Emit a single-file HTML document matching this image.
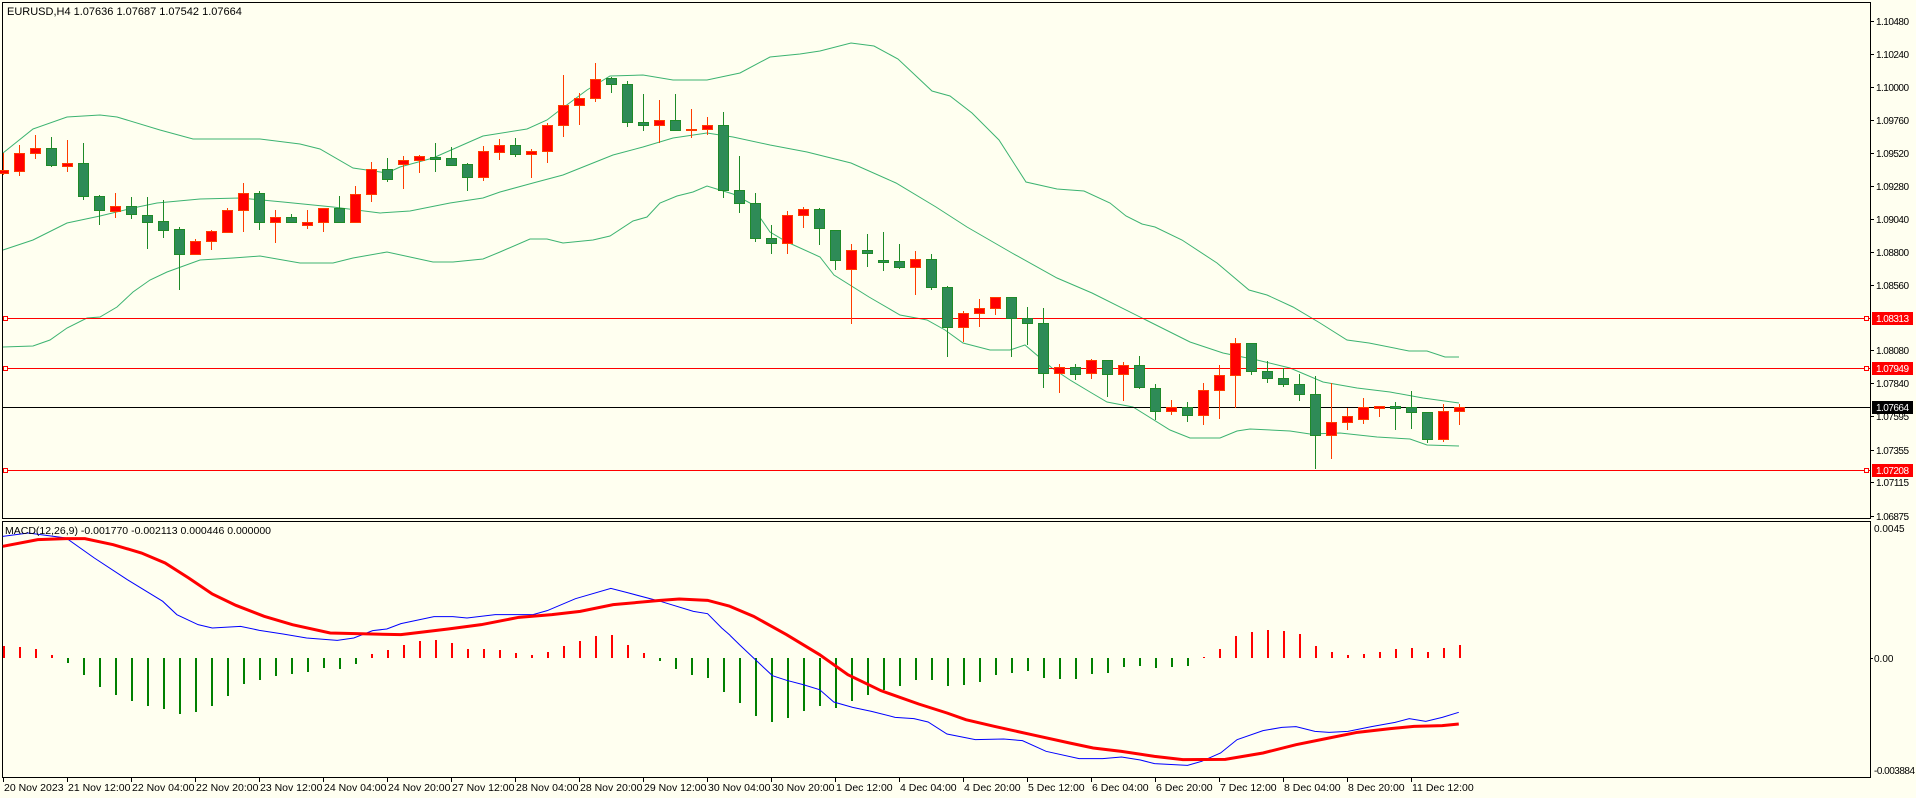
<!DOCTYPE html>
<html><head><meta charset="utf-8"><style>
html,body{margin:0;padding:0;background:#fffff0;width:1916px;height:798px;overflow:hidden}
svg{position:absolute;left:0;top:0}
text{font-family:"Liberation Sans",sans-serif;font-size:11px;fill:#000}
.ax{font-size:10px}
</style></head><body>
<svg id="s" width="1916" height="798" xmlns="http://www.w3.org/2000/svg">
<rect width="1916" height="798" fill="#fffff0"/>
<rect x="2.5" y="2.5" width="1868" height="516" fill="none" stroke="#000"/>
<rect x="2.5" y="521.5" width="1868" height="256" fill="none" stroke="#000"/>
<g fill="none" stroke="#3cb371" stroke-width="1">
<polyline points="3,153 33,129 67,117 100,115 117,117 160,130 193,139 233,139 260,139 300,144 320,149 353,168 387,173 400,167 433,158 467,143 483,136 527,129 547,120 560,110 587,90 610,76 643,75 673,80 707,80 740,73 770,57 800,54 820,51 851,43 874,46 898,59 932,91 950,96 972,113 999,140 1026,182 1057,189 1084,191 1110,203 1126,216 1142,224 1155,227 1182,240 1217,263 1249,290 1267,295 1293,307 1320,323 1347,340 1369,343 1409,351 1427,351 1445,357 1459,357"/>
<polyline points="3,250 33,240 67,223 100,216 133,208 157,203 200,199 240,198 283,202 333,207 380,213 410,211 450,203 483,198 500,192 533,183 563,175 583,167 613,155 643,147 673,138 707,133 733,137 770,145 807,152 851,163 896,183 936,207 967,227 1012,253 1057,278 1092,293 1146,320 1190,342 1223,353 1257,360 1290,368 1323,382 1357,388 1390,392 1423,398 1459,403"/>
<polyline points="3,347 33,346 50,340 67,328 87,318 100,317 117,307 133,292 150,280 167,272 200,260 233,258 260,256 300,263 333,263 353,258 387,252 410,257 433,262 453,262 483,259 500,252 530,239 547,239 563,243 593,240 610,236 633,221 647,217 660,203 677,196 693,192 707,186 733,194 750,203 770,232 787,242 820,257 834,275 869,297 900,315 927,320 945,330 963,343 990,350 1010,350 1025,345 1052,368 1070,380 1090,392 1107,402 1133,407 1170,430 1190,438 1220,438 1237,431 1250,429 1290,431 1310,434 1340,433 1377,437 1410,439 1427,445 1459,446"/>
</g>
<g stroke="#ff0000" stroke-width="1">
<line x1="3" y1="318.5" x2="1870" y2="318.5"/>
<line x1="3" y1="368.5" x2="1870" y2="368.5"/>
<line x1="3" y1="470.5" x2="1870" y2="470.5"/>
</g>
<line x1="3" y1="407.5" x2="1870" y2="407.5" stroke="#000"/>
<g fill="#fffff0" stroke="#ff0000">
<rect x="1864.5" y="316.5" width="4" height="4"/><rect x="1864.5" y="366.5" width="4" height="4"/><rect x="1864.5" y="468.5" width="4" height="4"/>
<rect x="3.5" y="316.5" width="4" height="4"/><rect x="3.5" y="366.5" width="4" height="4"/><rect x="3.5" y="468.5" width="4" height="4"/>
</g>
<g id="candles"></g>
<g id="hist"></g>
<g transform="translate(0,518) scale(0.4717,0.33333)" fill="none">
<polyline vector-effect="non-scaling-stroke" stroke="#0000ff" stroke-width="1" points="6,55 60,45 140,60 200,120 270,185 345,250 375,290 420,320 450,330 510,325 550,337 600,348 650,360 715,367 750,360 790,338 820,333 850,317 920,296 960,296 990,300 1050,290 1130,290 1160,278 1220,242 1295,211 1330,224 1400,250 1470,280 1500,287 1530,330 1548,352"/>
<polyline vector-effect="non-scaling-stroke" stroke="#ff0000" stroke-width="3" points="6,85 80,65 140,62 180,62 240,80 300,105 350,135 400,180 450,228 500,262 560,295 620,320 700,345 850,350 950,333 1020,320 1100,298 1170,290 1230,280 1300,260 1400,247 1440,243 1500,247 1548,265"/>
</g>
<g transform="translate(730,518) scale(0.4717,0.33333)" fill="none">
<polyline vector-effect="non-scaling-stroke" stroke="#0000ff" stroke-width="1" points="0,352 20,380 50,420 90,473 120,487 155,500 190,515 220,552 260,568 300,580 350,598 390,602 420,612 460,648 520,665 580,663 620,668 670,700 740,722 790,722 830,717 870,726 900,737 970,742 1000,730 1040,705 1075,665 1130,638 1170,628 1200,626 1240,640 1270,643 1310,640 1360,626 1410,613 1440,602 1475,610 1510,598 1545,583"/>
<polyline vector-effect="non-scaling-stroke" stroke="#ff0000" stroke-width="3" points="0,265 50,295 120,350 190,410 250,470 320,518 400,558 460,585 500,605 560,625 640,650 720,675 770,690 830,700 900,715 960,725 1050,724 1130,705 1200,680 1270,660 1330,643 1400,632 1450,625 1510,623 1545,618"/>
</g>
<text x="7" y="15">EURUSD,H4  1.07636 1.07687 1.07542 1.07664</text>
<text x="5" y="534" style="font-size:10.5px">MACD(12,26,9) -0.001770 -0.002113 0.000446 0.000000</text>
<g id="paxis"></g>
<g>
<rect x="1872" y="312" width="41" height="13" fill="#ff0000"/><text class="ax" x="1876" y="322" textLength="33" style="fill:#fff">1.08313</text>
<rect x="1872" y="362" width="41" height="13" fill="#ff0000"/><text class="ax" x="1876" y="372" textLength="33" style="fill:#fff">1.07949</text>
<rect x="1872" y="401" width="41" height="13" fill="#000"/><text class="ax" x="1876" y="411" textLength="33" style="fill:#fff">1.07664</text>
<rect x="1872" y="464" width="41" height="13" fill="#ff0000"/><text class="ax" x="1876" y="474" textLength="33" style="fill:#fff">1.07208</text>
</g>
<text class="ax" x="1874" y="532">0.0045</text>
<line x1="1870" y1="658.5" x2="1873" y2="658.5" stroke="#000"/>
<text class="ax" x="1874" y="662">0.00</text>
<text class="ax" x="1874" y="774" textLength="41">-0.003884</text>
<g id="taxis"></g>
</svg>
<script>
var NS="http://www.w3.org/2000/svg";
function el(p,n,a,t){var e=document.createElementNS(NS,n);for(var k in a)e.setAttribute(k,a[k]);if(t)e.textContent=t;p.appendChild(e);return e;}
var C=[
["R",153,170,173,175],["R",145,153,171,176],["R",135,148,153,159],["G",137,148,165,167],["R",140,163,166,172],["G",143,163,196,200],["G",195,196,210,225],["R",193,206,211,218],["G",197,206,214,219],["G",197,215,222,249],
["G",200,221,230,238],["G",227,229,254,290],["R",239,241,254,255],["R",230,231,241,250],["R",208,210,232,233],["R",183,193,210,232],["G",191,193,222,230],["R",210,217,222,243],["G",214,217,222,222],["R",210,222,225,229],
["R",208,208,222,232],["G",196,208,222,222],["R",186,194,222,223],["R",162,169,194,202],["G",158,169,179,182],["R",156,160,164,189],["R",155,156,160,173],["G",143,157,159,172],["G",147,158,165,166],["G",163,164,177,191],
["R",146,151,177,181],["R",139,145,152,160],["G",138,145,154,157],["R",149,151,154,178],["R",123,125,151,163],["R",75,105,125,137],["R",93,98,105,125],["R",63,79,98,102],["G",77,78,84,93],["G",81,84,122,127],
["G",94,122,125,131],["R",100,120,125,143],["G",94,120,130,131],["R",109,129,130,138],["R",117,125,129,135],["G",112,125,190,198],["G",156,190,203,213],["G",193,203,238,242],["G",225,238,243,254],["R",211,215,243,254],
["R",207,209,215,228],["G",208,209,228,245],["G",234,230,260,270],["R",244,250,269,324],["G",234,250,253,267],["G",232,260,262,271],["G",244,261,267,269],["R",251,259,267,295],["G",254,259,287,290],["G",286,287,327,357],
["R",311,313,327,342],["R",299,308,313,327],["R",297,297,308,315],["G",297,297,318,357],["G",307,318,323,345],["G",308,323,373,388],["R",364,367,373,393],["G",364,367,374,380],["R",359,360,373,379],["G",360,360,374,397],
["R",362,365,374,401],["G",356,365,387,389],["G",384,388,411,420],["R",400,407,411,415],["G",402,407,415,422],["R",383,390,415,425],["R",365,375,390,419],["R",338,343,375,408],["G",343,343,371,375],["G",361,371,378,383],
["G",368,378,384,387],["G",374,384,394,401],["G",376,394,435,469],["R",383,422,435,459],["R",408,416,422,430],["R",398,407,419,424],["R",406,406,408,417],["G",402,406,408,430],["G",391,407,412,429],["G",412,412,439,443],
["R",404,411,439,442],["R",404,407,411,425]];
var g=document.getElementById("candles");
C.forEach(function(c,k){var x=3+16*k;var red=c[0]=="R";var sc=red?"#ff3c00":"#1e8a28",fc=red?"#ff0000":"#2e8b57";
el(g,"line",{x1:x+0.5,x2:x+0.5,y1:c[1],y2:c[4],stroke:sc});
var h=Math.max(c[3]-c[2],1);
el(g,"rect",{x:x-4.5,y:c[2]+0.5,width:10,height:h,fill:fc,stroke:sc});});
var H=[646,647,649,655,663,675,687,695,701,706,709,714,712,706,696,684,680,676,674,672,668,669,664,654,650,645,641,640,643,649,649,650,653,655,652,646,641,636,635,645,653,661,669,675,678,692,703,716,722,718,711,706,708,701,695,690,686,680,680,686,685,682,675,673,671,678,679,679,674,673,667,666,668,667,666,657,649,636,632,630,631,634,646,652,655,654,652,649,648,652,648,645];
var hg=document.getElementById("hist");
H.forEach(function(v,k){var x=3+16*k;var up=v<658;el(hg,"rect",{x:x,y:up?v:658,width:2,height:Math.max(Math.abs(v-658),1),fill:up?"#ff0000":"#008000"});});
var pa=document.getElementById("paxis");
[["1.10480",21],["1.10240",54],["1.10000",87],["1.09760",120],["1.09520",153],["1.09280",186],["1.09040",219],["1.08800",252],["1.08560",285],["1.08080",350],["1.07840",383],["1.07595",416],["1.07355",450],["1.07115",482],["1.06875",516]].forEach(function(p){
el(pa,"line",{x1:1870,x2:1874,y1:p[1]+0.5,y2:p[1]+0.5,stroke:"#000"});el(pa,"text",{x:1876,y:p[1]+4,"class":"ax",textLength:33},p[0]);});
var ta=document.getElementById("taxis");
["20 Nov 2023","21 Nov 12:00","22 Nov 04:00","22 Nov 20:00","23 Nov 12:00","24 Nov 04:00","24 Nov 20:00","27 Nov 12:00","28 Nov 04:00","28 Nov 20:00","29 Nov 12:00","30 Nov 04:00","30 Nov 20:00","1 Dec 12:00","4 Dec 04:00","4 Dec 20:00","5 Dec 12:00","6 Dec 04:00","6 Dec 20:00","7 Dec 12:00","8 Dec 04:00","8 Dec 20:00","11 Dec 12:00"].forEach(function(t,i){var x=3+64*i;
el(ta,"line",{x1:x+0.5,x2:x+0.5,y1:778,y2:782,stroke:"#000"});el(ta,"text",{x:x+1,y:791,style:"font-size:10.5px"},t);});
</script>
</body></html>
